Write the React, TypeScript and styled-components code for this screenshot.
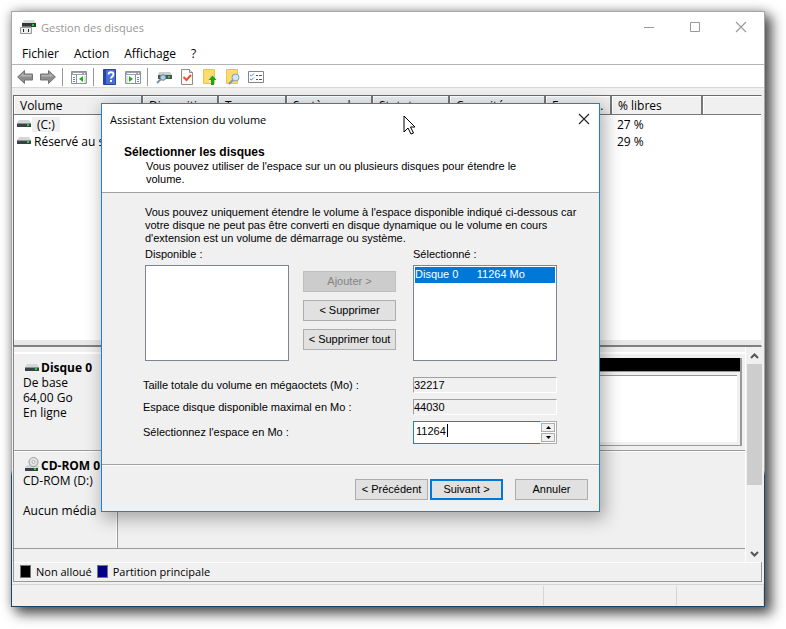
import React from "react";
import styled, { createGlobalStyle, css } from "styled-components";

const GlobalStyle = createGlobalStyle`
  *, *::before, *::after { box-sizing: border-box; }
  body {
    margin: 0;
    background: #fff;
    color: #000;
    font-family: "Open Sans", "Noto Sans", sans-serif;
    font-size: 12px;
    line-height: 15px;
  }
  button, input, select { font: inherit; color: inherit; margin: 0; border-radius: 0; }
  svg { flex-shrink: 0; }
`;

/* ---------- main window ---------- */

const Desktop = styled.div`
  display: flex;
  min-height: 100vh;
  padding: 11px 21px 22px 11px;
  overflow: hidden;
`;

const WindowEdge = styled.main`
  position: relative;
  flex: 1;
  min-width: 0;
  display: flex;
  padding: 1px;
  background: linear-gradient(#a6a6a6 77%, #1c4465 78%);
  box-shadow: 6px 6px 12px 1px rgba(0, 0, 0, 0.65), 0 0 10px rgba(0, 0, 0, 0.25);
`;

const WindowBody = styled.div`
  flex: 1;
  min-width: 0;
  display: flex;
  flex-direction: column;
  background: #f0f0f0;
`;

const TitleBar = styled.header`
  display: flex;
  align-items: center;
  height: 30px;
  padding-left: 8px;
  background: #fff;
  color: #999;
`;

const Title = styled.h1`
  flex: 1;
  margin: 0 0 0 5px;
  font-size: 11px;
  font-weight: 400;
`;

const CaptionButton = styled.button`
  display: flex;
  align-items: center;
  justify-content: center;
  width: 46px;
  height: 30px;
  padding: 0;
  border: 0;
  background: transparent;
`;

const MenuBar = styled.nav`
  display: flex;
  align-items: center;
  gap: 15px;
  height: 23px;
  padding-left: 10px;
  border-bottom: 1px solid #b5b5b5;
  background: #fff;
`;

const MenuItem = styled.button`
  padding: 0;
  border: 0;
  background: transparent;
`;

const ToolBar = styled.div`
  display: flex;
  align-items: center;
  gap: 7px;
  height: 23px;
  padding: 2px 0 0 5px;
  border-bottom: 1px solid #d8d8d8;
  background: #fff;
`;

const ToolButton = styled.button`
  display: flex;
  width: 16px;
  height: 16px;
  padding: 0;
  border: 0;
  background: transparent;
`;

const ToolSeparator = styled.span`
  width: 1px;
  height: 18px;
  margin: 0 1px 0 -1px;
  background: #999;
`;

const VolumePane = styled.section`
  height: 252px;
  margin: 7px 2px 0 1px;
  border: solid #6c6c6c;
  border-width: 1px 1px 2px 1px;
  border-right-color: #f0f0f0;
  border-bottom-color: #808080;
  background: linear-gradient(#fff 98%, #e8e8e8 98%);
  overflow: hidden;
`;

const VolumeTable = styled.table`
  width: 100%;
  table-layout: fixed;
  border-collapse: separate;
  border-spacing: 0;
`;

const Column = styled.col<{ $w?: number }>`
  ${(p) => p.$w && `width: ${p.$w}px;`}
`;

const HeadCell = styled.th`
  height: 19px;
  padding: 1px 0 1px 6px;
  border: solid #777;
  border-width: 0 2px 1px 0;
  box-shadow: inset 1px 1px #fff;
  background: #f0f0f0;
  font-weight: 400;
  line-height: 15px;
  text-align: left;
  white-space: nowrap;
  overflow: hidden;
  text-overflow: ellipsis;
  &:last-child { border-right: 0; }
`;

const Cell = styled.td`
  height: 17px;
  padding: 1px 0 0 5px;
  white-space: nowrap;
`;

const NameCell = styled(Cell)`
  padding: 1px 0 0 3px;
`;

const VolumeName = styled.span<{ $current?: boolean }>`
  display: flex;
  align-items: center;
  gap: 1px;
  span {
    padding: 0 2px;
    ${(p) => p.$current && css`padding: 0 5px; background: #f0f0f0;`}
  }
`;

const DiskPane = styled.section`
  flex: 1;
  min-height: 0;
  display: flex;
  margin: 0 2px 0 1px;
  border-left: 1px solid #8a8a8a;
`;

const DiskList = styled.div`
  flex: 1;
  min-width: 0;
  margin-top: 5px;
  border-top: 1px solid #fff;
`;

const DiskRow = styled.article`
  display: grid;
  grid-template-columns: 104px 1fr;
  height: 98px;
  border-bottom: 1px solid #999;
  box-shadow: inset 0 1px #fff;
`;

const DiskInfo = styled.div`
  padding: 7px 0 0 9px;
  border-right: 1px solid #999;
  box-shadow: inset -1px 0 #fff;
  white-space: nowrap;
`;

const DiskName = styled.h2`
  display: flex;
  align-items: center;
  gap: 2px;
  height: 15px;
  margin: 0;
  padding-left: 2px;
  font-size: 12px;
  line-height: 15px;
`;

const DiskLine = styled.p`
  min-height: 15px;
  margin: 0;
`;

const Partition = styled.div`
  display: flex;
  flex-direction: column;
  gap: 3px;
  margin: 5px 3px 4px 1px;
  border: solid #999;
  border-width: 0 2px 1px 0;
`;

const PartitionStripe = styled.div`
  height: 14px;
  border-bottom: 1px solid #999;
  background: #000;
`;

const PartitionBody = styled.div`
  flex: 1;
  margin: 0 3px 3px 0;
  border-top: 1px solid #999;
  background: #fff;
`;

const ScrollBar = styled.div`
  display: flex;
  flex-direction: column;
  align-items: center;
  width: 17px;
  background: #f0f0f0;
  border-left: 1px solid #fff;
`;

const ScrollButton = styled.button`
  display: flex;
  align-items: center;
  justify-content: center;
  width: 16px;
  height: 17px;
  padding: 0;
  border: 0;
  background: transparent;
`;

const ScrollTrack = styled.div`
  flex: 1;
  width: 15px;
`;

const ScrollThumb = styled.div`
  height: 67%;
  background: #cdcdcd;
`;

const Legend = styled.div`
  display: flex;
  align-items: center;
  gap: 5px;
  height: 20px;
  margin: 0 2px 0 1px;
  padding-left: 6px;
  border: solid #999;
  border-width: 0 1px 1px 1px;
  box-shadow: inset 0 1px #fff;
`;

const LegendText = styled.span`
  font-size: 11px;
`;

const Swatch = styled.span<{ $color: string }>`
  width: 11px;
  height: 13px;
  border: 1px solid #777;
  background: ${(p) => p.$color};
`;

const StatusBar = styled.footer`
  display: grid;
  grid-template-columns: 1fr 133px 87px;
  height: 22px;
  margin-top: 2px;
  padding-top: 1px;
  border-top: 1px solid #d5d5d5;
`;

const StatusCell = styled.span`
  margin-bottom: 1px;
  border-right: 1px solid #d5d5d5;
`;

/* ---------- wizard ---------- */

const Wizard = styled.section`
  position: absolute;
  top: 92px;
  left: 90px;
  right: 165px;
  min-width: 499px;
  border: 1px solid #1883d7;
  background: #f0f0f0;
  box-shadow: 3px 5px 16px 2px rgba(0, 0, 0, 0.3);
  font-family: "Liberation Sans", Arial, sans-serif;
  font-size: 11px;
  line-height: 13px;
`;

const WizardTitleBar = styled.header`
  display: flex;
  align-items: center;
  justify-content: space-between;
  height: 30px;
  padding-left: 8px;
  background: #fff;
  font-family: "Open Sans", "Noto Sans", sans-serif;
`;

const WizardTitle = styled.h2`
  margin: 0;
  font-size: 11px;
  font-weight: 400;
`;

const WizardClose = styled(CaptionButton)`
  width: 31px;
`;

const WizardHeading = styled.div`
  height: 59px;
  padding: 10px 70px 0 22px;
  border-bottom: 1px solid #a0a0a0;
  background: #fff;
`;

const StepTitle = styled.h3`
  margin: 0;
  font-size: 12px;
  line-height: 16px;
`;

const StepText = styled.p`
  margin: 0 0 0 22px;
`;

const Form = styled.form`
  padding: 13px 0 0;
`;

const Content = styled.div`
  padding: 0 42px 20px 43px;
`;

const Intro = styled.p`
  margin: 0 -36px 3px 0;
`;

const Transfer = styled.div`
  display: grid;
  grid-template-columns: 144px 1fr 144px;
  column-gap: 14px;
`;

const ListColumn = styled.div`
  display: flex;
  flex-direction: column;
  gap: 4px;
`;

const ListBox = styled.select`
  height: 96px;
  padding: 1px;
  border: 1px solid #7f858f;
  outline: 0;
  background: #fff;
  overflow: hidden;
  option {
    height: 16px;
    min-height: 16px;
    padding: 1px 0 0;
    line-height: 15px;
  }
  option:checked {
    background: #0078d7 linear-gradient(#0078d7, #0078d7);
    color: #fff;
    -webkit-text-fill-color: #fff;
  }
`;

const TransferActions = styled.div`
  display: flex;
  flex-direction: column;
  gap: 8px;
  padding: 23px 3px 0 0;
`;

const Button = styled.button<{ $primary?: boolean }>`
  height: 21px;
  padding: 0 2px;
  border: 1px solid #adadad;
  background: #e1e1e1;
  white-space: nowrap;
  ${(p) => p.$primary && css`border: 2px solid #0078d7;`}
  &:disabled {
    border-color: #bfbfbf;
    background: #ccc;
    color: #838383;
  }
`;

const Fields = styled.div`
  display: grid;
  grid-template-columns: 1fr 144px;
  grid-template-rows: 16px 16px 23px;
  row-gap: 6px;
  align-items: center;
  margin: 16px 0 0 -2px;
`;

const ReadOnlyField = styled.input`
  width: 100%;
  height: 16px;
  padding: 0;
  border: 1px solid #a0a0a0;
  border-right-color: #fff;
  border-bottom-color: #fff;
  background: #f0f0f0;
  outline: 0;
`;

const Spinner = styled.div`
  position: relative;
  display: flex;
  height: 23px;
  border: 1px solid #1883d7;
  background: #fff;
`;

const SpinnerInput = styled.input`
  flex: 1;
  min-width: 0;
  padding: 0 0 3px 2px;
  border: 0;
  outline: 0;
  background: transparent;
`;

const Caret = styled.span`
  position: absolute;
  top: 2px;
  left: 33px;
  width: 1px;
  height: 13px;
  background: #000;
`;

const SpinnerButtons = styled.div`
  display: flex;
  flex-direction: column;
  gap: 1px;
  width: 17px;
  margin: -1px;
  padding: 1px;
  border: 1px solid #adadad;
  border-left: 0;
  background: #fff;
`;

const SpinnerButton = styled.button`
  flex: 1;
  display: flex;
  align-items: center;
  justify-content: center;
  padding: 0;
  border: 1px solid #adadad;
  background: #f0f0f0;
`;

const WizardFooter = styled.footer`
  display: flex;
  justify-content: flex-end;
  gap: 2px;
  padding: 14px 11px 11px;
  border-top: 1px solid #a0a0a0;
  box-shadow: inset 0 1px #fff;
`;

const FooterButton = styled(Button)<{ $apart?: boolean }>`
  width: 73px;
  margin-left: ${(p) => (p.$apart ? 10 : 0)}px;
`;

const Pointer = styled.svg`
  position: absolute;
  top: 11px;
  left: 301px;
`;

/* ---------- drawings ---------- */

const DriveIcon = () => (
  <svg width="14" height="16" viewBox="0 0 14 16" aria-hidden="true">
    <path d="M2 4h10l2 3H0z" fill="#d4d7da" />
    <path d="M0 7h14v4H0z" fill="#3b4144" />
    <path d="M0 7h14v1H0z" fill="#8c9194" />
    <path d="M10 8h2v2h-2z" fill="#22d43b" />
  </svg>
);

const CdIcon = () => (
  <svg width="14" height="18" viewBox="0 0 14 18" aria-hidden="true">
    <path d="M2 8h11l1 3H0z" fill="#d4d7da" />
    <path d="M0 11h13v3H0z" fill="#3b4144" />
    <path d="M9 11h2v2H9z" fill="#22d43b" />
    <circle cx="8.500" cy="5" r="4.500" fill="#e3e5e6" stroke="#999" />
    <circle cx="8.500" cy="5" r="1.500" fill="#fff" stroke="#aaa" />
  </svg>
);

const AppIcon = () => (
  <svg width="16" height="16" viewBox="0 0 16 16" aria-hidden="true">
    <path d="M4 1h10l2 3H2z" fill="#d9dcde" />
    <path d="M2 4h14v4H2z" fill="#34383a" />
    <path d="M12 5h2v2h-2z" fill="#1fd13a" />
    <path d="M2 7h9v2H2z" fill="#777" />
    <path d="M.5 8.500h11v6H.5z" fill="#eee" stroke="#999" />
    <path d="M3 10h1v3H3zM8 10h1v3H8z" fill="#222" />
  </svg>
);

const ArrowIcon = ({ forward }: { forward?: boolean }) => (
  <svg width="16" height="16" viewBox="0 0 16 16" aria-hidden="true">
    <g transform={forward ? "matrix(-1 0 0 1 16 0)" : undefined}>
      <path d="M.6 8 7.500 1.500V5h8v6h-8v3.500z" fill="#8e8e8e" stroke="#737373" />
      <path d="M2.500 7.500 6.500 4v2h8v1.500z" fill="#b5b5b5" />
    </g>
  </svg>
);

const PanelIcon = ({ right }: { right?: boolean }) => (
  <svg width="16" height="16" viewBox="0 0 16 16" aria-hidden="true">
    <path d="M.5 2.500h15v12H.5z" fill="#fff" stroke="#8a9199" />
    <path d="M1 3h14v3H1z" fill="#9aa1a8" />
    <path d="M2 4h9v1H2zM13 4h1v1h-1z" fill="#fff" />
    {right ? (
      <>
        <path d="M10.500 6v8" stroke="#8a9199" />
        <path d="M12 8.500h2M12 10.500h2M12 12.500h2" stroke="#4d8fc9" />
        <path d="M4 7v6l4-3z" fill="#18b51a" />
        <path d="M1 7h2v7H1z" fill="#dde1e5" />
      </>
    ) : (
      <>
        <path d="M5.500 6v8" stroke="#8a9199" />
        <path d="M2 8.500h2M2 10.500h2M2 12.500h2" stroke="#4d8fc9" />
        <path d="M12 7v6l-4-3z" fill="#18b51a" />
        <path d="M13 7h2v7h-2z" fill="#dde1e5" />
      </>
    )}
  </svg>
);

const HelpIcon = () => (
  <svg width="16" height="16" viewBox="0 0 16 16" aria-hidden="true">
    <path d="M1.500.5h12v15h-12z" fill="#4a70d8" stroke="#2846a0" />
    <path d="M2 1h2v14H2z" fill="#2746a5" />
    <path d="M6.500 5.500c0-3 5-3 5 0 0 2-2.500 2-2.500 4" fill="none" stroke="#fff" strokeWidth="1.800" />
    <path d="M8 11h2v2H8z" fill="#fff" />
  </svg>
);

const SearchDriveIcon = () => (
  <svg width="16" height="16" viewBox="0 0 16 16" aria-hidden="true">
    <path d="M3 3h11l2 3H2z" fill="#c9cdd0" />
    <path d="M2 6h14v4H2z" fill="#4b5458" />
    <path d="M12 7h2v2h-2z" fill="#1fd13a" />
    <path d="M5 10 1 14" stroke="#7d93a5" strokeWidth="2" />
    <circle cx="7" cy="8.500" r="2.800" fill="#a9cfe9" stroke="#6f8798" />
  </svg>
);

const CheckDocIcon = () => (
  <svg width="16" height="16" viewBox="0 0 16 16" aria-hidden="true">
    <path d="M2.500.5h8l3 3v12h-11z" fill="#fbfbfb" stroke="#8c8c8c" />
    <path d="M10.500.5v3h3" fill="#ddd" stroke="#8c8c8c" />
    <path d="m4.500 8 3 3 4.500-5" fill="none" stroke="#ee5327" strokeWidth="2" />
  </svg>
);

const FolderUpIcon = () => (
  <svg width="16" height="16" viewBox="0 0 16 16" aria-hidden="true">
    <path d="M1.500.5h11v14h-11z" fill="#fddb6d" stroke="#eac64f" />
    <path d="M7 14V9h5v5z" fill="#fbe59c" />
    <path d="M10.500 6.500 14.500 11H12v5H9v-5H6.500z" fill="#12a91c" />
  </svg>
);

const FolderSearchIcon = () => (
  <svg width="16" height="16" viewBox="0 0 16 16" aria-hidden="true">
    <path d="M1.500.5h11v14h-11z" fill="#fddb6d" stroke="#eac64f" />
    <path d="m8 11-4 4" stroke="#8496a5" strokeWidth="2" />
    <circle cx="10.500" cy="8.500" r="3.500" fill="#cfe6f5" stroke="#7d9db5" />
  </svg>
);

const ListIcon = () => (
  <svg width="16" height="16" viewBox="0 0 16 16" aria-hidden="true">
    <path d="M.5 2.500h15v11H.5z" fill="#fff" stroke="#80868c" />
    <path d="m2 6 1.500 1L6 4.500M2 10l1.500 1L6 8.500" fill="none" stroke="#3f91d6" />
    <path d="M8 6.500h2M11 6.500h3M8 10.500h2M11 10.500h3" stroke="#555" />
  </svg>
);

const CrossIcon = ({ color }: { color: string }) => (
  <svg width="12" height="12" viewBox="0 0 12 12" aria-hidden="true">
    <path d="m1 1 10 10M11 1 1 11" stroke={color} strokeWidth="1.100" />
  </svg>
);

const Chevron = ({ down }: { down?: boolean }) => (
  <svg width="9" height="8" viewBox="0 0 9 8" aria-hidden="true">
    <path d={down ? "m1 2 3.500 3.500L8 2" : "m1 6 3.500-3.500L8 6"} fill="none" stroke="#555" strokeWidth="2" />
  </svg>
);

const Triangle = ({ down }: { down?: boolean }) => (
  <svg width="5" height="3" viewBox="0 0 5 3" aria-hidden="true">
    <path d={down ? "M0 0h5L2.500 3z" : "M0 3h5L2.500 0z"} />
  </svg>
);

/* ---------- data ---------- */

const columns = [
  { label: "Volume", width: 129 },
  { label: "Disposition", width: 76 },
  { label: "Type", width: 68 },
  { label: "Système de fichiers", width: 86 },
  { label: "Statut", width: 77 },
  { label: "Capacité", width: 96 },
  { label: "Espace disponible", width: 66 },
  { label: "% libres", width: 91 },
  { label: "" },
];

const volumes = [
  { name: "(C:)", free: "27 %", current: true },
  { name: "Réservé au système", free: "29 %" },
];

type Tool = { label: string; icon: React.ReactNode } | null;

const tools: Tool[] = [
  { label: "Précédent", icon: <ArrowIcon /> },
  { label: "Suivant", icon: <ArrowIcon forward /> },
  null,
  { label: "Arborescence", icon: <PanelIcon /> },
  null,
  { label: "Aide", icon: <HelpIcon /> },
  { label: "Volet Actions", icon: <PanelIcon right /> },
  null,
  { label: "Analyser les disques", icon: <SearchDriveIcon /> },
  { label: "Propriétés", icon: <CheckDocIcon /> },
  { label: "Ouvrir", icon: <FolderUpIcon /> },
  { label: "Explorer", icon: <FolderSearchIcon /> },
  { label: "Liste", icon: <ListIcon /> },
];

function ExtendWizard() {
  return (
    <Wizard role="dialog" aria-labelledby="wizard-title">
      <WizardTitleBar>
        <WizardTitle id="wizard-title">Assistant Extension du volume</WizardTitle>
        <WizardClose type="button" aria-label="Fermer">
          <CrossIcon color="#222" />
        </WizardClose>
      </WizardTitleBar>
      <WizardHeading>
        <StepTitle>Sélectionner les disques</StepTitle>
        <StepText>Vous pouvez utiliser de l'espace sur un ou plusieurs disques pour étendre le volume.</StepText>
      </WizardHeading>
      <Form onSubmit={(e) => e.preventDefault()}>
        <Content>
          <Intro>
            Vous pouvez uniquement étendre le volume à l'espace disponible indiqué ci-dessous car
            <br />
            votre disque ne peut pas être converti en disque dynamique ou le volume en cours
            <br />
            d'extension est un volume de démarrage ou système.
          </Intro>
          <Transfer>
            <ListColumn>
              <label htmlFor="available">Disponible :</label>
              <ListBox id="available" size={6} />
            </ListColumn>
            <TransferActions>
              <Button type="button" disabled>Ajouter &gt;</Button>
              <Button type="button">&lt; Supprimer</Button>
              <Button type="button">&lt; Supprimer tout</Button>
            </TransferActions>
            <ListColumn>
              <label htmlFor="selected">Sélectionné :</label>
              <ListBox id="selected" size={6} defaultValue="0">
                <option value="0">{"Disque 0\u00a0\u00a0\u00a0\u00a0\u00a0\u00a011264 Mo"}</option>
              </ListBox>
            </ListColumn>
          </Transfer>
          <Fields>
            <label htmlFor="total">Taille totale du volume en mégaoctets (Mo) :</label>
            <ReadOnlyField id="total" readOnly value="32217" />
            <label htmlFor="maximum">Espace disque disponible maximal en Mo :</label>
            <ReadOnlyField id="maximum" readOnly value="44030" />
            <label htmlFor="amount">Sélectionnez l'espace en Mo :</label>
            <Spinner>
              <SpinnerInput id="amount" defaultValue="11264" />
              <Caret />
              <SpinnerButtons>
                <SpinnerButton type="button" aria-label="Augmenter"><Triangle /></SpinnerButton>
                <SpinnerButton type="button" aria-label="Diminuer"><Triangle down /></SpinnerButton>
              </SpinnerButtons>
            </Spinner>
          </Fields>
        </Content>
        <WizardFooter>
          <FooterButton type="button">&lt; Précédent</FooterButton>
          <FooterButton type="submit" $primary>Suivant &gt;</FooterButton>
          <FooterButton type="button" $apart>Annuler</FooterButton>
        </WizardFooter>
      </Form>
      <Pointer width="13" height="21" viewBox="0 0 13 21" aria-hidden="true">
        <path d="M1 1v16l4-4 3 6 2.500-1-3-6H12z" fill="#fff" stroke="#000" />
      </Pointer>
    </Wizard>
  );
}

export default function App() {
  return (
    <>
      <GlobalStyle />
      <Desktop>
        <WindowEdge>
          <WindowBody>
            <TitleBar>
              <AppIcon />
              <Title>Gestion des disques</Title>
              <CaptionButton aria-label="Réduire">
                <svg width="12" height="12" aria-hidden="true"><path d="M1 6.500h10" stroke="#999" /></svg>
              </CaptionButton>
              <CaptionButton aria-label="Agrandir">
                <svg width="12" height="12" aria-hidden="true"><path d="M1.500 1.500h9v9h-9z" fill="none" stroke="#999" /></svg>
              </CaptionButton>
              <CaptionButton aria-label="Fermer"><CrossIcon color="#999" /></CaptionButton>
            </TitleBar>
            <MenuBar>
              {["Fichier", "Action", "Affichage", "?"].map((m) => <MenuItem key={m}>{m}</MenuItem>)}
            </MenuBar>
            <ToolBar>
              {tools.map((t, i) =>
                t ? <ToolButton key={i} aria-label={t.label}>{t.icon}</ToolButton> : <ToolSeparator key={i} />
              )}
            </ToolBar>
            <VolumePane>
              <VolumeTable>
                <colgroup>{columns.map((c) => <Column key={c.label} $w={c.width} />)}</colgroup>
                <thead>
                  <tr>{columns.map((c) => <HeadCell key={c.label}>{c.label}</HeadCell>)}</tr>
                </thead>
                <tbody>
                  {volumes.map((v) => (
                    <tr key={v.name}>
                      <NameCell>
                        <VolumeName $current={v.current}><DriveIcon /><span>{v.name}</span></VolumeName>
                      </NameCell>
                      <Cell colSpan={6} />
                      <Cell>{v.free}</Cell>
                      <Cell />
                    </tr>
                  ))}
                </tbody>
              </VolumeTable>
            </VolumePane>
            <DiskPane>
              <DiskList>
                <DiskRow>
                  <DiskInfo>
                    <DiskName><DriveIcon />Disque 0</DiskName>
                    <DiskLine>De base</DiskLine>
                    <DiskLine>64,00 Go</DiskLine>
                    <DiskLine>En ligne</DiskLine>
                  </DiskInfo>
                  <Partition>
                    <PartitionStripe />
                    <PartitionBody />
                  </Partition>
                </DiskRow>
                <DiskRow>
                  <DiskInfo>
                    <DiskName><CdIcon />CD-ROM 0</DiskName>
                    <DiskLine>CD-ROM (D:)</DiskLine>
                    <DiskLine />
                    <DiskLine>Aucun média</DiskLine>
                  </DiskInfo>
                </DiskRow>
              </DiskList>
              <ScrollBar>
                <ScrollButton aria-label="Défiler vers le haut"><Chevron /></ScrollButton>
                <ScrollTrack><ScrollThumb /></ScrollTrack>
                <ScrollButton aria-label="Défiler vers le bas"><Chevron down /></ScrollButton>
              </ScrollBar>
            </DiskPane>
            <Legend>
              <Swatch $color="#000" /><LegendText>Non alloué</LegendText>
              <Swatch $color="#00008b" /><LegendText>Partition principale</LegendText>
            </Legend>
            <StatusBar><StatusCell /><StatusCell /><StatusCell /></StatusBar>
          </WindowBody>
          <ExtendWizard />
        </WindowEdge>
      </Desktop>
    </>
  );
}
